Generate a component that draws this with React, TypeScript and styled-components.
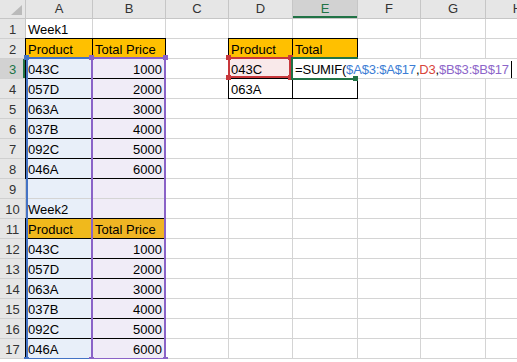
import React from 'react';
import styled, { createGlobalStyle, css } from 'styled-components';

const GlobalStyle = createGlobalStyle`
  html, body {
    margin: 0;
    padding: 0;
    background: #fff;
    overflow: hidden;
  }
  body {
    font-family: 'Liberation Sans', Arial, sans-serif;
  }
`;

const COL_WIDTHS = [26, 67, 73, 63, 64, 65, 63, 65, 64];
const LETTERS = ['A', 'B', 'C', 'D', 'E', 'F', 'G', 'H'];
const ROW_COUNT = 17;

const ORANGE = '#ffc000';
const BLUE_FILL = '#e8eff9';
const PURPLE_FILL = '#f0ecf7';
const PINK_FILL = '#f9e9ea';
const GREEN = '#217346';
const BLUE = '#4472c4';
const PURPLE = '#8a63c7';
const RED = '#c8383c';

type Corner = 'tl' | 'tr' | 'bl' | 'br';

interface CellSpec {
  value?: React.ReactNode;
  fill?: string;
  align?: 'left' | 'right';
  boxed?: boolean;
}

const Sheet = styled.div`
  position: relative;
  display: grid;
  grid-template-columns: ${COL_WIDTHS.map((w) => `${w}px`).join(' ')};
  grid-template-rows: 19px repeat(${ROW_COUNT}, 20px);
  width: max-content;
  font-size: 13px;
  color: #000;
`;

const Corner = styled.div`
  position: relative;
  box-sizing: border-box;
  background: #e6e6e6;
  border-right: 1px solid #c6c6c6;
  border-bottom: 1px solid #c6c6c6;

  &::after {
    content: '';
    position: absolute;
    right: 3px;
    bottom: 3px;
    width: 0;
    height: 0;
    border-left: 11px solid transparent;
    border-bottom: 10px solid #bababa;
  }
`;

const ColHeader = styled.div<{ $active?: boolean }>`
  box-sizing: border-box;
  background: ${(p) => (p.$active ? '#d2d2d2' : '#e6e6e6')};
  color: ${(p) => (p.$active ? GREEN : '#333')};
  border-right: 1px solid #c6c6c6;
  border-bottom: 1px solid #c6c6c6;
  text-align: center;
  line-height: 18px;
  ${(p) =>
    p.$active &&
    css`
      box-shadow: inset 0 -2px 0 ${GREEN};
    `}
`;

const RowHeader = styled.div<{ $active?: boolean }>`
  box-sizing: border-box;
  background: ${(p) => (p.$active ? '#d2d2d2' : '#e6e6e6')};
  color: ${(p) => (p.$active ? GREEN : '#333')};
  border-right: 1px solid #c6c6c6;
  border-bottom: 1px solid #d0d0d0;
  display: flex;
  align-items: flex-end;
  justify-content: center;
  padding-bottom: 1px;
  line-height: 15px;
  ${(p) =>
    p.$active &&
    css`
      box-shadow: inset -2px 0 0 ${GREEN};
    `}
`;

const Cell = styled.div<{ $fill?: string; $align?: 'left' | 'right'; $boxed?: boolean }>`
  position: relative;
  box-sizing: border-box;
  min-width: 0;
  background: ${(p) => p.$fill ?? '#fff'};
  border-right: 1px solid #d4d4d4;
  border-bottom: 1px solid #d4d4d4;
  padding: 0 3px 1px 2px;
  display: flex;
  align-items: flex-end;
  justify-content: ${(p) => (p.$align === 'right' ? 'flex-end' : 'flex-start')};
  line-height: 15px;
  white-space: nowrap;

  ${(p) =>
    p.$boxed &&
    css`
      &::after {
        content: '';
        position: absolute;
        left: -1px;
        top: -1px;
        right: -1px;
        bottom: -1px;
        border: 1px solid #000;
        z-index: 1;
        pointer-events: none;
      }
    `}
`;

// the cell being edited: its text spills over F and G on a white strip
const EditCell = styled(Cell)`
  padding: 0;
  align-items: stretch;
`;

const EditText = styled.span`
  position: relative;
  z-index: 3;
  display: flex;
  align-items: flex-end;
  height: 19px;
  box-sizing: border-box;
  padding: 0 2px 1px 2px;
  background: #fff;
  line-height: 15px;
  letter-spacing: -0.18px;
`;

const Ref = styled.span<{ $color: string }>`
  color: ${(p) => p.$color};
`;

const Caret = styled.span`
  display: inline-block;
  width: 1px;
  height: 17px;
  margin-left: 2px;
  margin-bottom: -1px;
  background: #000;
`;

const RangeBox = styled.div<{ $color: string; $open?: boolean }>`
  position: absolute;
  box-sizing: border-box;
  border: 2px solid ${(p) => p.$color};
  ${(p) =>
    p.$open &&
    css`
      border-right: none;
    `}
  z-index: 4;
  pointer-events: none;
`;

const Handle = styled.span<{ $color: string; $corner: Corner }>`
  position: absolute;
  width: 5px;
  height: 5px;
  background: ${(p) => p.$color};
  ${(p) => (p.$corner[0] === 't' ? 'top: -4px;' : 'bottom: -4px;')}
  ${(p) => (p.$corner[1] === 'l' ? 'left: -4px;' : 'right: -4px;')}
`;

const FillHandle = styled.span`
  position: absolute;
  right: 0;
  bottom: -3px;
  width: 5px;
  height: 5px;
  background: ${GREEN};
`;

const products = ['043C', '057D', '063A', '037B', '092C', '046A'];
const prices = ['1000', '2000', '3000', '4000', '5000', '6000'];

const buildCells = () => {
  const cells: Record<string, CellSpec> = {};
  for (let r = 3; r <= 17; r++) {
    cells[`A${r}`] = { fill: BLUE_FILL };
    cells[`B${r}`] = { fill: PURPLE_FILL };
  }

  cells.A1 = { value: 'Week1' };
  cells.A2 = { value: 'Product', fill: ORANGE, boxed: true };
  cells.B2 = { value: 'Total Price', fill: ORANGE, boxed: true };
  cells.A10 = { value: 'Week2', fill: BLUE_FILL };
  cells.A11 = { value: 'Product', fill: '#f0b91c', boxed: true };
  cells.B11 = { value: 'Total Price', fill: '#f0b524', boxed: true };

  [3, 12].forEach((start) => {
    products.forEach((p, i) => {
      cells[`A${start + i}`] = { value: p, fill: BLUE_FILL, boxed: true };
      cells[`B${start + i}`] = {
        value: prices[i],
        fill: PURPLE_FILL,
        align: 'right',
        boxed: true,
      };
    });
  });

  cells.D2 = { value: 'Product', fill: ORANGE, boxed: true };
  cells.E2 = { value: 'Total', fill: ORANGE, boxed: true };
  cells.D3 = { value: '043C', fill: PINK_FILL, boxed: true };
  cells.E3 = { boxed: true };
  cells.D4 = { value: '063A', boxed: true };
  cells.E4 = { boxed: true };
  return cells;
};

const cells = buildCells();

const App: React.FC = () => {
  const rows = Array.from({ length: ROW_COUNT }, (_, i) => i + 1);

  const ranges = [
    { color: BLUE, left: 26, top: 57, width: 67, height: 303, corners: ['tl', 'bl'] as Corner[] },
    { color: PURPLE, left: 91, top: 57, width: 75, height: 303, corners: ['tl', 'tr', 'bl', 'br'] as Corner[] },
    { color: RED, left: 228, top: 57, width: 63, height: 21, corners: ['tl', 'tr', 'bl', 'br'] as Corner[] },
  ];

  return (
    <>
      <GlobalStyle />
      <Sheet>
        <Corner />
        {LETTERS.map((l) => (
          <ColHeader key={l} $active={l === 'E'}>
            {l}
          </ColHeader>
        ))}

        {rows.map((r) => (
          <React.Fragment key={r}>
            <RowHeader $active={r === 3}>{r}</RowHeader>
            {LETTERS.map((l) => {
              const spec = cells[`${l}${r}`] ?? {};
              if (l === 'E' && r === 3) {
                return (
                  <EditCell key={l} $boxed>
                    <EditText>
                      =SUMIF(
                      <Ref $color="#3c7dd4">$A$3:$A$17</Ref>,
                      <Ref $color="#d8453b">D3</Ref>,
                      <Ref $color="#8d66c9">$B$3:$B$17</Ref>
                      <Caret />
                    </EditText>
                  </EditCell>
                );
              }
              return (
                <Cell key={l} $fill={spec.fill} $align={spec.align} $boxed={spec.boxed}>
                  {spec.value}
                </Cell>
              );
            })}
          </React.Fragment>
        ))}

        {ranges.map((rg) => (
          <RangeBox
            key={rg.color}
            $color={rg.color}
            style={{ left: rg.left, top: rg.top, width: rg.width, height: rg.height }}
          >
            {rg.corners.map((c) => (
              <Handle key={c} $color={rg.color} $corner={c} />
            ))}
          </RangeBox>
        ))}

        <RangeBox $color={GREEN} $open style={{ left: 291, top: 57, width: 67, height: 23 }}>
          <FillHandle />
        </RangeBox>
      </Sheet>
    </>
  );
};

export default App;
